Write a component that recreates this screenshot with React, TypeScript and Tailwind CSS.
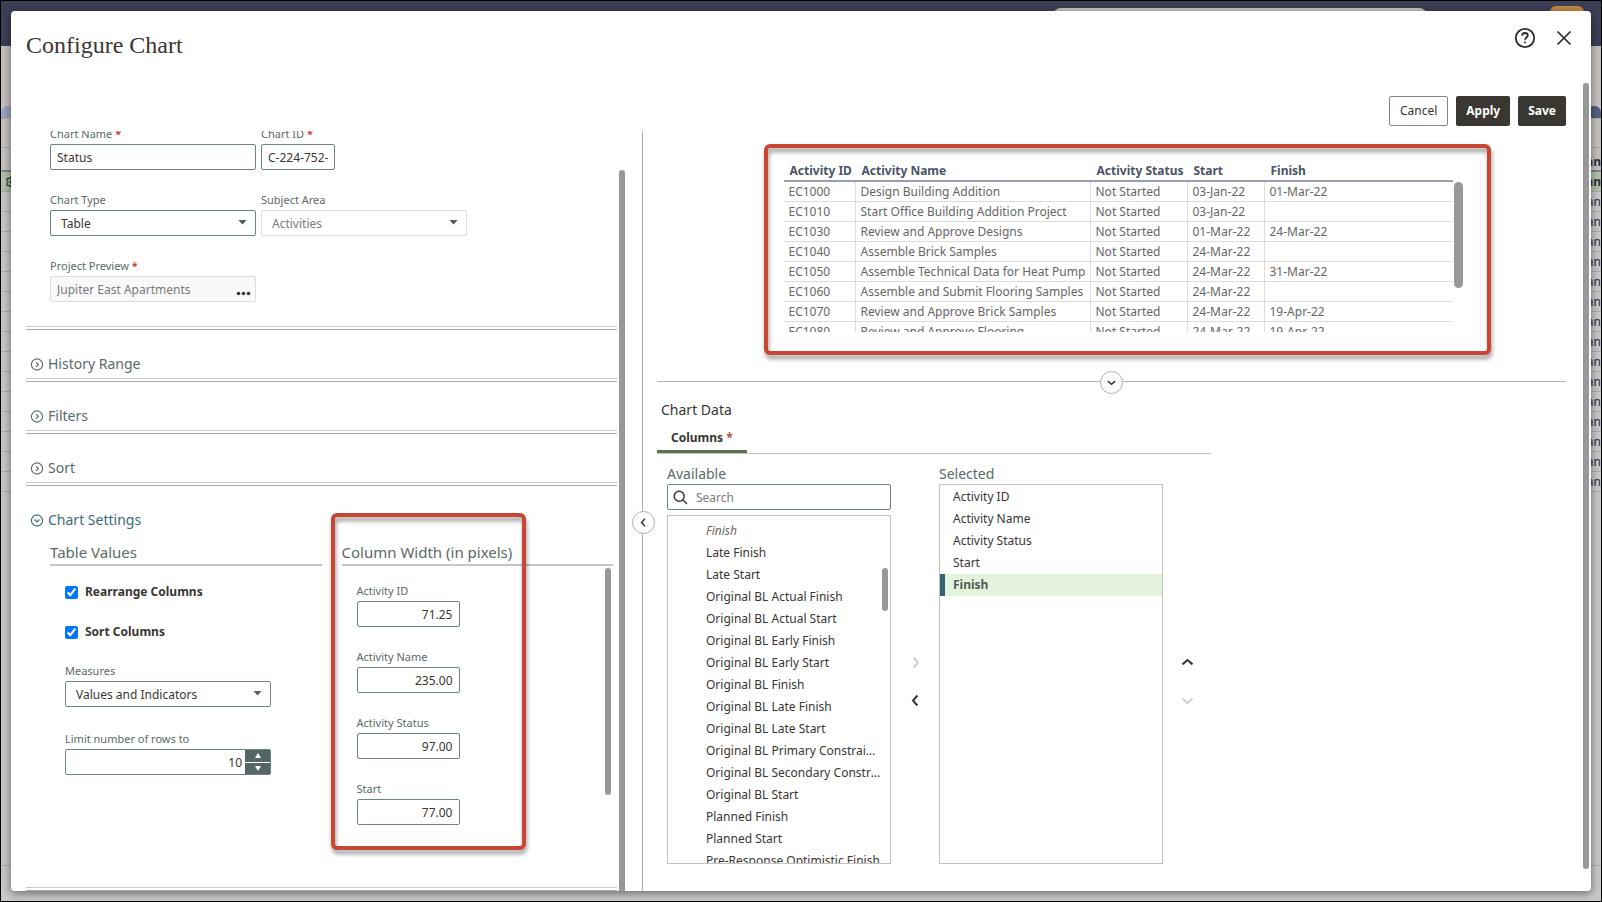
import React, { useState } from 'react';
import { Settings } from 'lucide-react';

const previewRows = [
  ['EC1000', 'Design Building Addition', 'Not Started', '03-Jan-22', '01-Mar-22'],
  ['EC1010', 'Start Office Building Addition Project', 'Not Started', '03-Jan-22', ''],
  ['EC1030', 'Review and Approve Designs', 'Not Started', '01-Mar-22', '24-Mar-22'],
  ['EC1040', 'Assemble Brick Samples', 'Not Started', '24-Mar-22', ''],
  ['EC1050', 'Assemble Technical Data for Heat Pump', 'Not Started', '24-Mar-22', '31-Mar-22'],
  ['EC1060', 'Assemble and Submit Flooring Samples', 'Not Started', '24-Mar-22', ''],
  ['EC1070', 'Review and Approve Brick Samples', 'Not Started', '24-Mar-22', '19-Apr-22'],
  ['EC1080', 'Review and Approve Flooring', 'Not Started', '24-Mar-22', '19-Apr-22'],
];

const availableColumns = [
  'Finish',
  'Late Finish',
  'Late Start',
  'Original BL Actual Finish',
  'Original BL Actual Start',
  'Original BL Early Finish',
  'Original BL Early Start',
  'Original BL Finish',
  'Original BL Late Finish',
  'Original BL Late Start',
  'Original BL Primary Constraint Date',
  'Original BL Secondary Constraint Date',
  'Original BL Start',
  'Planned Finish',
  'Planned Start',
  'Pre-Response Optimistic Finish',
];

const selectedColumns = ['Activity ID', 'Activity Name', 'Activity Status', 'Start', 'Finish'];

const columnWidths = [
  { id: 'w-id', label: 'Activity ID', value: '71.25' },
  { id: 'w-name', label: 'Activity Name', value: '235.00' },
  { id: 'w-status', label: 'Activity Status', value: '97.00' },
  { id: 'w-start', label: 'Start', value: '77.00' },
];

type Direction = 'left' | 'right' | 'up' | 'down';

const chevrons: Record<Direction, string> = {
  left: 'M7.5 2 4 6l3.500 4',
  right: 'M4.500 2 8 6l-3.500 4',
  up: 'M2 7.500 6 4l4 3.500',
  down: 'M2 4.500 6 8l4-3.500',
};

const Chevron = ({ to, size = 12 }: { to: Direction; size?: number }) => (
  <svg width={size} height={size} viewBox="0 0 12 12" fill="none" stroke="currentColor" strokeWidth="1.6">
    <path d={chevrons[to]} />
  </svg>
);

const Required = () => <span className="font-bold text-[#c74634]">*</span>;

const DoubleRule = () => <div className="h-1 shrink-0 border-t border-b border-t-[#cbcbcb] border-b-[#a9a9a9]" />;

const Field = ({ id, label, required, className, children }: {
  id: string;
  label: string;
  required?: boolean;
  className?: string;
  children: React.ReactNode;
}) => (
  <div className={className}>
    <label htmlFor={id} className="mb-0.5 block text-[11px] leading-4 whitespace-nowrap text-[#5a6a68]">
      {label} {required && <Required />}
    </label>
    {children}
  </div>
);

const SelectBox = ({ id, options, disabled }: { id: string; options: string[]; disabled?: boolean }) => (
  <div className="relative">
    <select
      id={id}
      disabled={disabled}
      className={`block h-[26px] w-full appearance-none rounded-xs border bg-white pt-0.5 pl-2.5 text-xs opacity-100 ${
        disabled ? 'border-[#dcdcdc] text-[#7a7a7a]' : 'border-[#6b8583] text-[#3a3632]'
      }`}
    >
      {options.map((o) => (
        <option key={o}>{o}</option>
      ))}
    </select>
    <svg className="pointer-events-none absolute top-2.5 right-[9px]" width="9" height="5" viewBox="0 0 9 5">
      <path d="M0.500 0h8L4.500 4.500z" fill="#4f5f5d" />
    </svg>
  </div>
);

const SectionHeader = ({ title, open }: { title: string; open?: boolean }) => (
  <button className={`flex items-center gap-1 px-1 pt-6 pb-1 text-sm leading-5 ${open ? 'text-[#3b6c79]' : 'text-[#5a6a68]'}`}>
    <svg width="14" height="14" viewBox="0 0 14 14" fill="none" stroke="currentColor" strokeWidth="1.100">
      <circle cx="7" cy="7.500" r="5.600" />
      <path d={open ? 'M4.600 6.500 7 8.900l2.400-2.400' : 'M6 5.100l2.400 2.400L6 9.900'} />
    </svg>
    {title}
  </button>
);

// Red highlight frame, laid over the area it points at
const Callout = ({ className }: { className: string }) => (
  <div
    className={`pointer-events-none absolute rounded-md border-4 border-[#c74634] drop-shadow-[1px_4px_2px_rgba(0,0,0,0.4)] ${className}`}
  />
);

const MoveButton = ({ to, label, disabled }: { to: Direction; label: string; disabled?: boolean }) => (
  <button
    aria-label={label}
    disabled={disabled}
    className="flex size-[22px] items-center justify-center text-[#3a3632] disabled:text-[#cfcfcf]"
  >
    <Chevron to={to} size={15} />
  </button>
);

const BackgroundPage = () => (
  <div aria-hidden="true" className="absolute inset-0 flex flex-col overflow-hidden bg-[#c8c8c8] text-xs text-[#2d3140]">
    <div className="flex h-[45px] shrink-0 items-start justify-end bg-[#3c3f56]">
      <div className="mt-[7px] h-8 w-[374px] rounded-lg bg-[#c9c7c4]" />
      <div className="mt-[5px] mr-[17px] ml-[123px] h-8 w-[34px] rounded-md bg-[#c78b43]" />
    </div>
    <div className="h-[60px] shrink-0 bg-[#c4c0bd]" />
    <div className="flex h-3 shrink-0 justify-between">
      <div className="w-8 rounded-tl-md bg-[#9ba5c1]" />
      <div className="w-8 rounded-tr-md bg-[#55607f]" />
    </div>
    <div className="h-[30px] shrink-0 border-y border-[#ababab] bg-[#c5c2bf]" />
    <div className="h-6 shrink-0 border-b-2 border-[#7d8291] bg-[#c5c2bf] text-right leading-7 font-bold">an</div>
    <div className="flex h-5 shrink-0 items-center justify-between border-b border-[#ababab] bg-[#b3c2a8] pl-1 font-bold">
      <Settings size={14} />
      an
    </div>
    {Array.from({ length: 15 }, (_, i) => (
      <div key={i} className="h-5 shrink-0 border-b border-[#adadad] text-right leading-5">an</div>
    ))}
    <div className="mb-[35px] flex-1 border-b border-[#adadad]" />
  </div>
);

const SettingsPanel = () => {
  const [rearrange, setRearrange] = useState(true);
  const [sort, setSort] = useState(true);
  const [limit, setLimit] = useState(10);

  return (
    <div className="flex w-[631px] shrink-0 overflow-hidden pl-[15px]">
      <div className="flex flex-1 flex-col">
        {/* General */}
        <div className="-mt-[5px] flex flex-col gap-[22px] pb-6 pl-6">
          <div className="flex gap-[5px]">
            <Field id="chart-name" label="Chart Name" required className="w-[206px]">
              <input id="chart-name" defaultValue="Status" className="block h-[26px] w-full rounded-xs border border-[#6b8583] px-1.5 text-xs text-[#3a3632]" />
            </Field>
            <Field id="chart-id" label="Chart ID" required className="w-[74px]">
              <input id="chart-id" defaultValue="C-224-752-" className="block h-[26px] w-full rounded-xs border border-[#6b8583] px-1.5 text-xs text-[#3a3632]" />
            </Field>
          </div>
          <div className="flex gap-[5px]">
            <Field id="chart-type" label="Chart Type" className="w-[206px]">
              <SelectBox id="chart-type" options={['Table']} />
            </Field>
            <Field id="subject-area" label="Subject Area" className="w-[206px]">
              <SelectBox id="subject-area" options={['Activities']} disabled />
            </Field>
          </div>
          <Field id="project-preview" label="Project Preview" required className="w-[206px]">
            <div className="flex h-[26px] items-center rounded-xs border border-[#dcdcdc] bg-[#f9f9f9] pr-1">
              <input id="project-preview" readOnly value="Jupiter East Apartments" className="min-w-0 flex-1 px-1.5 pt-0.5 text-xs text-[#7a7a7a]" />
              <button aria-label="Choose project" className="pt-2 text-[#3a3632]">
                <svg width="15" height="5" viewBox="0 0 15 5" fill="currentColor">
                  <circle cx="2.500" cy="2.500" r="1.800" />
                  <circle cx="7.500" cy="2.500" r="1.800" />
                  <circle cx="12.500" cy="2.500" r="1.800" />
                </svg>
              </button>
            </div>
          </Field>
        </div>
        <DoubleRule />
        <SectionHeader title="History Range" />
        <DoubleRule />
        <SectionHeader title="Filters" />
        <DoubleRule />
        <SectionHeader title="Sort" />
        <DoubleRule />
        <SectionHeader title="Chart Settings" open />

        <div className="mt-1.5 flex flex-1 gap-5 pr-1 pl-6">
          <div className="flex-1">
            <h3 className="border-b-2 border-[#c9c5c1] text-[15px] leading-6 text-[#5a6a68]">Table Values</h3>
            <div className="pt-4 pl-[15px]">
              <label className="flex h-5 items-center gap-[7px] text-xs font-bold text-[#3a3632]">
                <input type="checkbox" checked={rearrange} onChange={(e) => setRearrange(e.target.checked)} className="size-[13px]" />
                Rearrange Columns
              </label>
              <label className="mt-5 mb-[21px] flex h-5 items-center gap-[7px] text-xs font-bold text-[#3a3632]">
                <input type="checkbox" checked={sort} onChange={(e) => setSort(e.target.checked)} className="size-[13px]" />
                Sort Columns
              </label>
              <Field id="measures" label="Measures" className="w-[206px]">
                <SelectBox id="measures" options={['Values and Indicators']} />
              </Field>
              <Field id="limit" label="Limit number of rows to" className="mt-6 w-[206px]">
                <div className="flex h-[26px] rounded-xs border border-[#6b8583]">
                  <input
                    id="limit"
                    value={limit}
                    onChange={(e) => setLimit(Number(e.target.value))}
                    className="min-w-0 flex-1 px-[3px] pt-0.5 text-right text-xs text-[#3a3632]"
                  />
                  <div className="flex w-[25px] flex-col gap-px text-white">
                    <button aria-label="Increase" onClick={() => setLimit(limit + 1)} className="flex flex-1 items-center justify-center bg-[#546664]">
                      <svg width="6" height="5" viewBox="0 0 6 5" fill="currentColor"><path d="M3 0l3 5H0z" /></svg>
                    </button>
                    <button aria-label="Decrease" onClick={() => setLimit(limit - 1)} className="flex flex-1 items-center justify-center bg-[#546664]">
                      <svg width="6" height="5" viewBox="0 0 6 5" fill="currentColor"><path d="M3 5L0 0h6z" /></svg>
                    </button>
                  </div>
                </div>
              </Field>
            </div>
          </div>

          <div className="relative flex-1">
            <h3 className="border-b-2 border-[#c9c5c1] text-[15px] leading-6 text-[#5a6a68]">Column Width (in pixels)</h3>
            <div className="flex justify-between pr-0.5 pl-[15px]">
              <div className="flex flex-col gap-[22px] pt-[17px]">
                {columnWidths.map((c) => (
                  <Field key={c.id} id={c.id} label={c.label}>
                    <input id={c.id} defaultValue={c.value} className="block h-[26px] w-[103px] rounded-xs border border-[#6b8583] px-1.5 text-right text-xs text-[#3a3632]" />
                  </Field>
                ))}
              </div>
              <div className="mt-0.5 h-[227px] w-1.5 rounded-full bg-[#989898]" />
            </div>
            <Callout className="-top-[27px] -left-[11px] h-[337px] w-[195px]" />
          </div>
        </div>
        <DoubleRule />
      </div>
      <div className="mt-[39px] mr-[17px] ml-0.5 w-1.5 rounded-t-full bg-[#989898]" />
    </div>
  );
};

const PreviewTable = () => (
  <div className="relative flex h-[170px] w-[679px] items-start">
    <div className="h-full flex-1 overflow-hidden">
      <table className="w-full table-fixed border-separate border-spacing-0 text-left text-xs whitespace-nowrap">
        <colgroup>
          <col className="w-[72px]" />
          <col className="w-[235px]" />
          <col className="w-[97px]" />
          <col className="w-[77px]" />
          <col />
        </colgroup>
        <thead>
          <tr>
            {selectedColumns.map((h) => (
              <th key={h} className="h-5 border-b-2 border-[#9a9eb2] p-0 pl-1.5 leading-4 font-bold text-[#4a5468]">{h}</th>
            ))}
          </tr>
        </thead>
        <tbody className="text-[#666]">
          {previewRows.map((row) => (
            <tr key={row[0]}>
              {row.map((cell, i) => (
                <td key={i} className="h-5 border-r border-b border-[#dcdcdc] p-0 pl-[5px] leading-4 last:border-r-0">{cell}</td>
              ))}
            </tr>
          ))}
        </tbody>
      </table>
    </div>
    <div className="mt-5 ml-px h-[106px] w-[9px] rounded-full bg-[#989898]" />
    <Callout className="-top-[18px] -left-5 h-[211px] w-[727px]" />
  </div>
);

const DataPanel = () => {
  const [active, setActive] = useState('Finish');

  return (
    <div className="relative flex min-w-0 flex-1 flex-col border-l border-[#b0b0b0] pl-3.5">
      <button
        aria-label="Collapse settings"
        className="absolute top-1/2 -left-[11px] flex size-[23px] items-center justify-center rounded-full border border-[#b5aeaa] bg-white text-[#3a3632]"
      >
        <Chevron to="left" size={11} />
      </button>

      <div className="flex justify-center pt-[31px] pr-0.5 pb-[49px]">
        <PreviewTable />
      </div>

      <div className="relative mr-[25px] flex h-px justify-center bg-[#b5b5b5]">
        <button
          aria-label="Collapse preview"
          className="absolute -top-2.5 flex size-[23px] items-center justify-center rounded-full border border-[#b5aeaa] bg-white text-[#3a3632]"
        >
          <Chevron to="down" size={11} />
        </button>
      </div>

      <h2 className="mt-[18px] pl-1 text-sm leading-5 text-[#3a3632]">Chart Data</h2>
      <div className="flex w-[554px] border-b border-[#c4c1be]">
        <button className="border-b-3 border-[#55744c] px-3.5 pt-2 pb-0.5 text-xs leading-5 font-bold text-[#3a3632]">
          Columns <Required />
        </button>
      </div>

      <div className="mt-2.5 flex min-h-0 flex-1 pb-[27px] pl-2.5">
        {/* Available */}
        <div className="flex w-56 flex-col">
          <label htmlFor="search" className="text-sm leading-5 text-[#5a6a68]">Available</label>
          <div className="mb-[5px] flex h-[26px] shrink-0 items-center rounded-xs border border-[#6b8583] pl-[5px]">
            <svg width="15" height="15" viewBox="0 0 15 15" fill="none" stroke="#3a3632" strokeWidth="1.500">
              <circle cx="6.200" cy="6.200" r="5" />
              <path d="M9.800 9.800l4.200 4.200" />
            </svg>
            <input id="search" placeholder="Search" className="min-w-0 flex-1 px-2 pt-0.5 text-xs outline-none placeholder:text-[#7a7a7a]" />
          </div>
          <div className="relative min-h-0 flex-1 overflow-hidden border border-[#c4c1be] pt-1">
            <ul className="text-xs text-[#3a3632]">
              {availableColumns.map((c) => (
                <li key={c} className="h-[22px] truncate pr-2 pl-[38px] leading-[22px] first:text-[#6b6763] first:italic">{c}</li>
              ))}
            </ul>
            <div className="absolute top-[52px] right-0.5 h-[43px] w-1.5 rounded-full bg-[#989898]" />
          </div>
        </div>

        <div className="flex w-12 flex-col items-center justify-center gap-4 pt-[34px]">
          <MoveButton to="right" label="Add" disabled />
          <MoveButton to="left" label="Remove" />
        </div>

        {/* Selected */}
        <div className="flex w-56 flex-col">
          <h3 className="text-sm leading-5 text-[#5a6a68]">Selected</h3>
          <ul className="flex-1 border border-[#c4c1be] pt-px text-xs text-[#3a3632]">
            {selectedColumns.map((c) => (
              <li key={c}>
                <button
                  onClick={() => setActive(c)}
                  className={`block h-[22px] w-full border-l-5 pl-2 text-left ${
                    c === active ? 'border-[#2f6473] bg-[#e4f3dc] font-bold text-[#4c5f58]' : 'border-transparent'
                  }`}
                >
                  {c}
                </button>
              </li>
            ))}
          </ul>
        </div>

        <div className="flex w-12 flex-col items-center justify-center gap-4 pt-[34px]">
          <MoveButton to="up" label="Move up" />
          <MoveButton to="down" label="Move down" disabled />
        </div>
      </div>
    </div>
  );
};

const App = () => (
  <div className="relative flex h-screen border border-black p-2.5 font-['Noto_Sans',sans-serif]">
    <BackgroundPage />

    <div role="dialog" aria-label="Configure Chart" className="relative flex min-w-0 flex-1 flex-col overflow-hidden rounded-sm bg-white shadow-[0_2px_10px_rgba(0,0,0,0.5)]">
      <div className="flex h-[85px] shrink-0 items-start justify-between pt-4 pr-[15px] pl-[15px]">
        <h1 className="font-['Liberation_Serif',serif] text-2xl leading-9 text-[#3a3632]">Configure Chart</h1>
        <div className="flex gap-4 text-[#2f2b28]">
          <button aria-label="Help">
            <svg width="22" height="22" viewBox="0 0 22 22" fill="none" stroke="currentColor" strokeWidth="1.800">
              <circle cx="11" cy="11" r="9.200" />
              <path d="M8.200 8.800c0-1.700 1.200-2.800 2.800-2.800s2.800 1 2.800 2.500c0 2-2.800 2.100-2.800 4.200" />
              <path d="M11 14.400v1.900" />
            </svg>
          </button>
          <button aria-label="Close" className="px-1">
            <svg width="16" height="16" viewBox="0 0 16 16" fill="none" stroke="currentColor" strokeWidth="1.700">
              <path d="M1.500 1.500l13 13M14.500 1.500l-13 13" />
            </svg>
          </button>
        </div>
      </div>

      <div className="flex justify-end gap-2 pr-[25px] pb-[5px] text-xs">
        <button className="h-[30px] rounded-xs border border-[#8b8580] px-2.5 text-[#3a3632]">Cancel</button>
        <button className="h-[30px] rounded-xs bg-[#3a3631] px-2.5 font-bold text-white">Apply</button>
        <button className="h-[30px] rounded-xs bg-[#3a3631] px-2.5 font-bold text-white">Save</button>
      </div>

      <div className="flex min-h-0 flex-1">
        <SettingsPanel />
        <DataPanel />
      </div>

      <div className="absolute top-[72px] right-0.5 bottom-[22px] w-1.5 rounded-full bg-[#989898]" />
    </div>
  </div>
);

export default App;
